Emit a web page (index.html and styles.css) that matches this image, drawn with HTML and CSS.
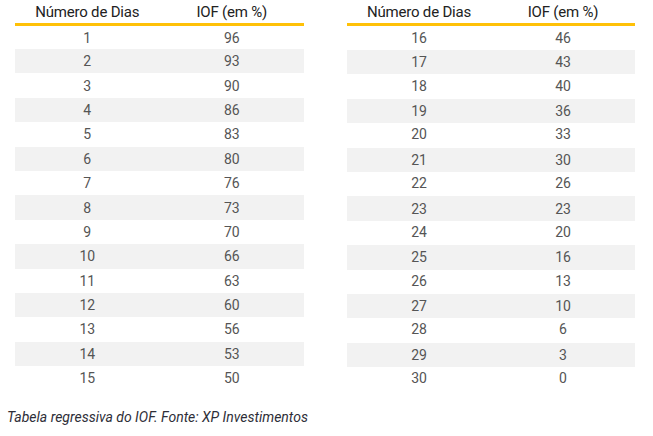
FILE: index.html
```html
<!DOCTYPE html>
<html lang="pt-BR">
<head>
<meta charset="utf-8">
<link rel="stylesheet" href="styles.css">
</head>
<body>
<div class="tables">
  <div class="iof-table">
    <div class="row head"><span>Número de Dias</span><span>IOF (em %)</span></div>
    <div class="row"><span>1</span><span>96</span></div>
    <div class="row alt"><span>2</span><span>93</span></div>
    <div class="row"><span>3</span><span>90</span></div>
    <div class="row alt"><span>4</span><span>86</span></div>
    <div class="row"><span>5</span><span>83</span></div>
    <div class="row alt"><span>6</span><span>80</span></div>
    <div class="row"><span>7</span><span>76</span></div>
    <div class="row alt"><span>8</span><span>73</span></div>
    <div class="row"><span>9</span><span>70</span></div>
    <div class="row alt"><span>10</span><span>66</span></div>
    <div class="row"><span>11</span><span>63</span></div>
    <div class="row alt"><span>12</span><span>60</span></div>
    <div class="row"><span>13</span><span>56</span></div>
    <div class="row alt"><span>14</span><span>53</span></div>
    <div class="row"><span>15</span><span>50</span></div>
  </div>
  <div class="iof-table right">
    <div class="row head"><span>Número de Dias</span><span>IOF (em %)</span></div>
    <div class="row"><span>16</span><span>46</span></div>
    <div class="row alt"><span>17</span><span>43</span></div>
    <div class="row"><span>18</span><span>40</span></div>
    <div class="row alt"><span>19</span><span>36</span></div>
    <div class="row"><span>20</span><span>33</span></div>
    <div class="row alt"><span>21</span><span>30</span></div>
    <div class="row"><span>22</span><span>26</span></div>
    <div class="row alt"><span>23</span><span>23</span></div>
    <div class="row"><span>24</span><span>20</span></div>
    <div class="row alt"><span>25</span><span>16</span></div>
    <div class="row"><span>26</span><span>13</span></div>
    <div class="row alt"><span>27</span><span>10</span></div>
    <div class="row"><span>28</span><span>6</span></div>
    <div class="row alt"><span>29</span><span>3</span></div>
    <div class="row"><span>30</span><span>0</span></div>
  </div>
</div>
<p class="caption">Tabela regressiva do IOF. Fonte: XP Investimentos</p>
</body>
</html>
```

FILE: styles.css
```css
html, body {
  margin: 0;
  padding: 0;
  background: #ffffff;
}
body {
  width: 653px;
  height: 436px;
  overflow: hidden;
  font-family: Roboto, "Liberation Sans", sans-serif;
}
.tables {
  display: flex;
  gap: 43px;
  padding-left: 15px;
}
.iof-table {
  width: 289px;
  display: flex;
  flex-direction: column;
}
.iof-table.right {
  width: 288px;
}
.row {
  display: grid;
  grid-template-columns: 1fr 1fr;
  height: 24.4px;
  align-items: center;
  text-align: center;
  font-size: 14px;
  color: #555555;
}
.row span {
  line-height: 16px;
}
.row.head {
  height: 23px;
  border-bottom: 3px solid #ffc107;
  color: #222222;
  font-size: 15px;
  letter-spacing: -0.2px;
  align-items: end;
}
.row.head span {
  line-height: 17px;
  padding-bottom: 2px;
}
.row.head + .row {
  height: 23px;
}
.row.alt {
  background: #f2f2f2;
}
.right .row.alt {
  transform: translateY(1px);
}
.caption {
  margin: 19px 0 0 7px;
  font-size: 14px;
  font-style: italic;
  color: #2e2e38;
  line-height: 17px;
}
```
